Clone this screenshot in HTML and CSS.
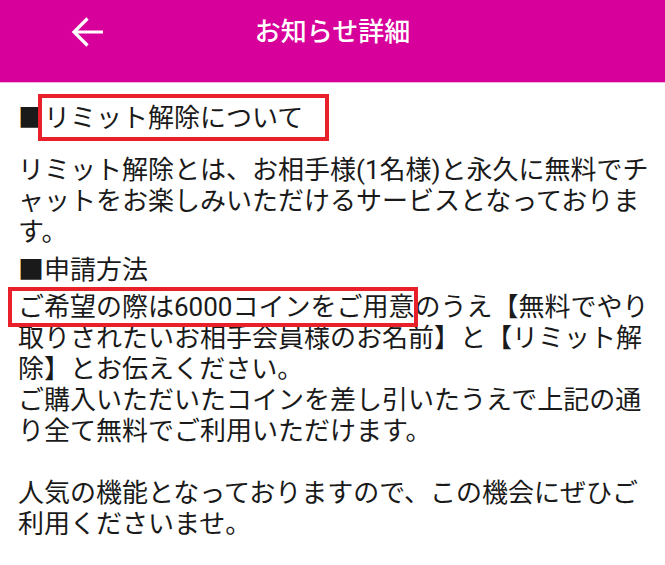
FILE: index.html
```html
<!DOCTYPE html>
<html lang="ja">
<head>
<meta charset="utf-8">
<link rel="stylesheet" href="styles.css">
</head>
<body>
<header class="bar">
  <span class="back">
    <svg width="34" height="32" viewBox="0 0 34 32"><path d="M32 16H3M16.5 2.5L3 16l13.5 13.5" fill="none" stroke="#fff" stroke-width="3.2" stroke-linecap="butt" stroke-linejoin="miter"/></svg>
  </span>
  <h1 class="title">お知らせ詳細</h1>
</header>
<main class="content">
  <p class="head1">■<span class="mark mark1">リミット解除について</span></p>
  <p class="para1">リミット解除とは、お相手様(1名様)と永久に無料でチャットをお楽しみいただけるサービスとなっております。</p>
  <p class="head2">■申請方法</p>
  <p class="para2"><span class="mark mark2">ご希望の際は6000コインをご用意</span>のうえ【無料でやり取りされたいお相手会員様のお名前】と【リミット解除】とお伝えください。<br>ご購入いただいたコインを差し引いたうえで上記の通り全て無料でご利用いただけます。<br><br>人気の機能となっておりますので、この機会にぜひご利用くださいませ。</p>
</main>
</body>
</html>
```
FILE: styles.css
```css
html, body {
  margin: 0;
  padding: 0;
  background: #fff;
}
body {
  font-family: Roboto, "Noto Sans CJK JP", sans-serif;
  color: #1a1a1a;
  width: 665px;
}
.bar {
  height: 82px;
  background: #d8009a;
  border-bottom: 1px solid #eeb6dd;
  display: flex;
  align-items: flex-start;
  justify-content: center;
  position: relative;
}
.back {
  position: absolute;
  left: 71px;
  top: 16px;
  width: 34px;
  height: 32px;
  display: block;
}
.back svg { display: block; }
.title {
  margin: 14px 0 0 0;
  font-size: 26px;
  font-weight: 500;
  color: #fff;
  line-height: 36px;
}
.content {
  padding: 20px 10px 0 18px;
  font-size: 26px;
  line-height: 31px;
  line-break: loose;
}
.content p { margin: 0; }
.para1 { margin-top: 21px !important; }
.head2 { margin-top: 7px !important; }
.para2 { margin-top: 6px !important; }
.mark { position: relative; }
.mark::after {
  content: "";
  position: absolute;
  box-sizing: border-box;
  top: 50%;
  border: 4px solid #e8202a;
}
.mark1::after {
  left: -6px;
  right: -26px;
  height: 47px;
  margin-top: -24px;
}
.mark2::after {
  left: -10px;
  right: -4px;
  height: 40px;
  margin-top: -20px;
}
```
